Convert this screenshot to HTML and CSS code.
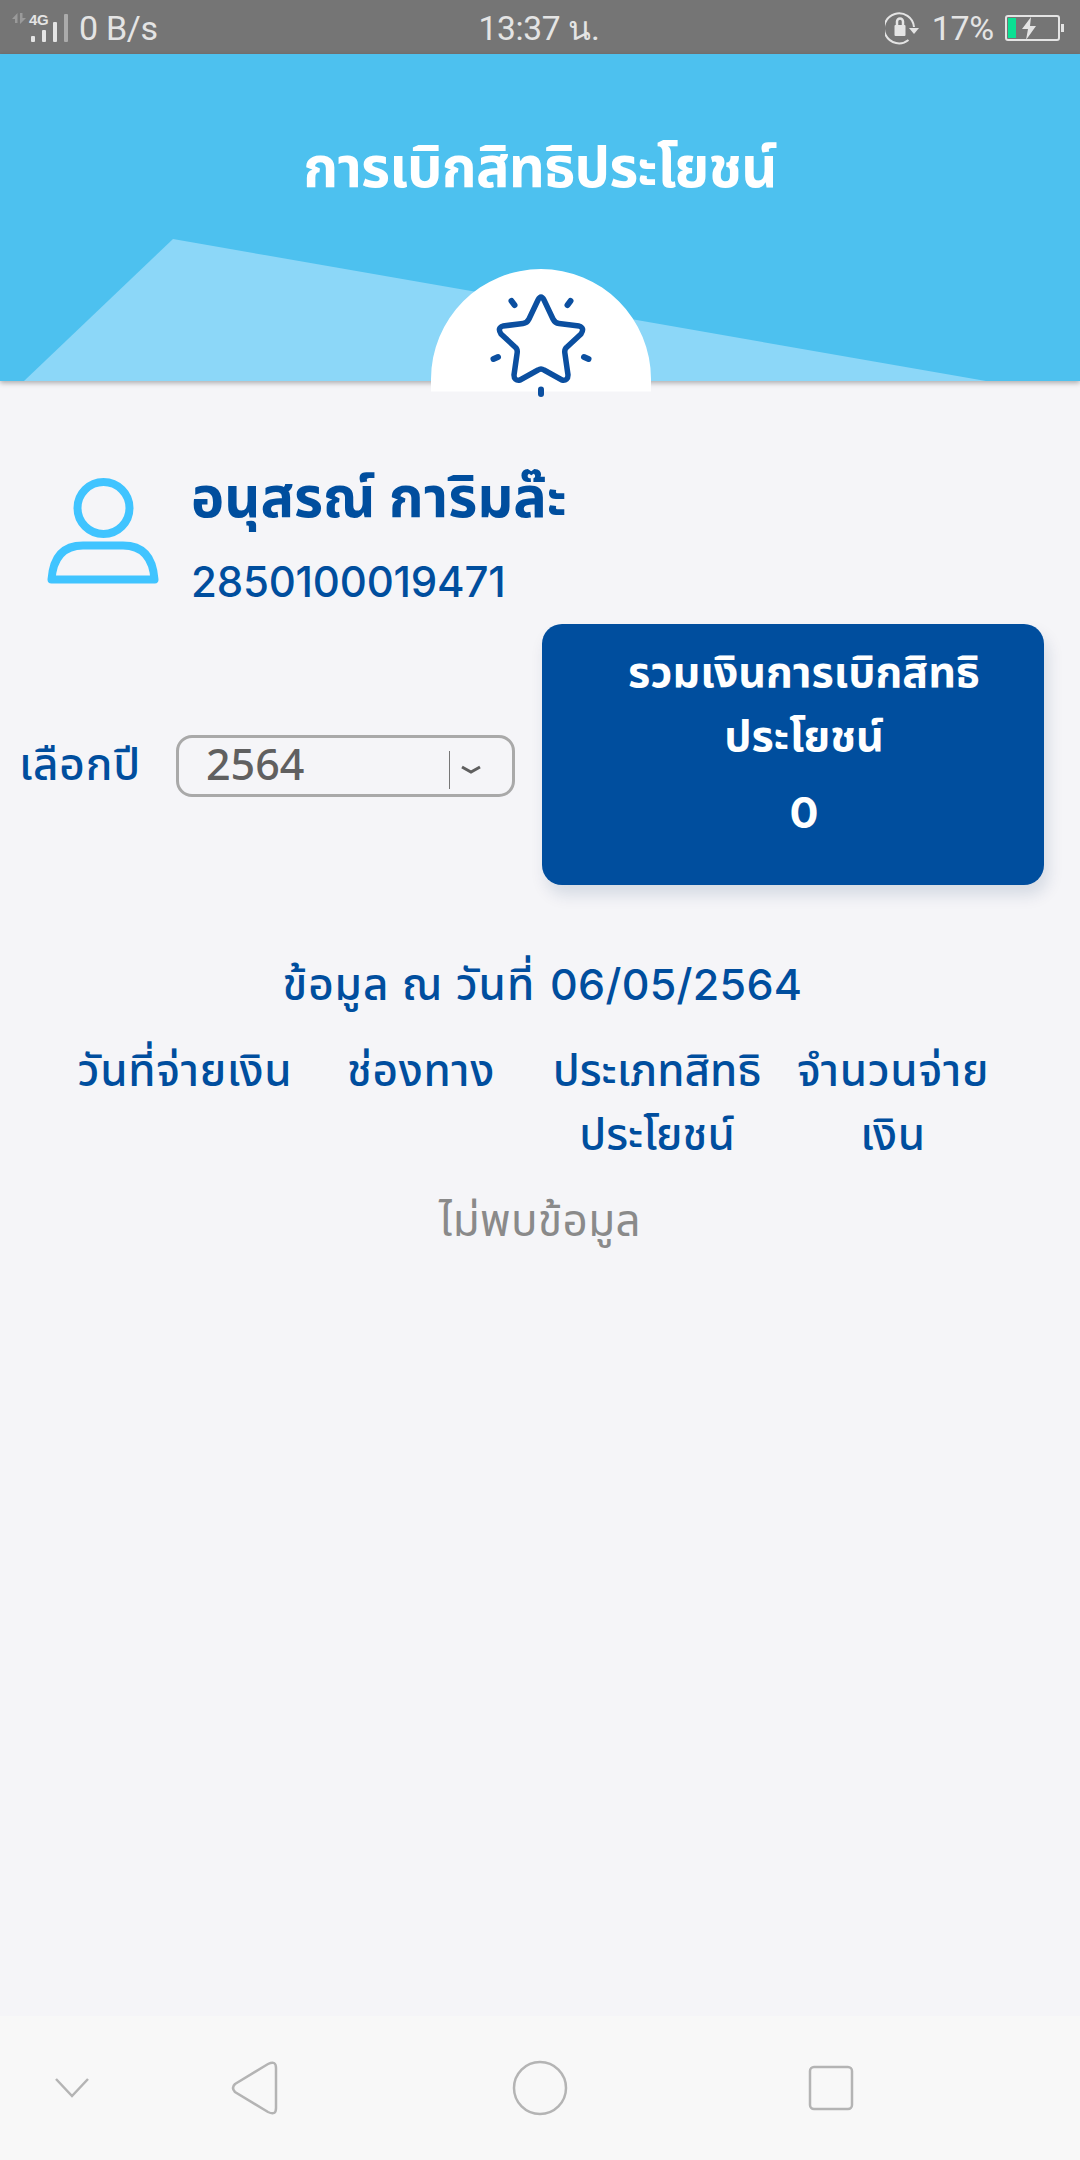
FILE: index.html
```html
<!DOCTYPE html>
<html lang="th">
<head>
    <meta charset="UTF-8">
    <meta name="viewport" content="width=device-width, initial-scale=1.0">
    <title>การเบิกสิทธิประโยชน์</title>
    <link rel="stylesheet" href="styles.css">
</head>
<body>

<div class="status-bar">
    <div class="status-left">
        <svg class="signal" width="58" height="40" viewBox="0 -4 58 40">
            <path d="M0 6 L5.500 0 V10 H3 V6 Z M8 0 H10.500 V5 H14 L8 11 Z" fill="#9a9a9a"/>
            <rect x="19" y="23" width="4" height="6" rx="1" fill="#e4e4e4"/>
            <rect x="30" y="17" width="4" height="12" rx="1" fill="#e4e4e4"/>
            <rect x="41" y="9" width="4" height="20" rx="1" fill="#e4e4e4"/>
            <rect x="52" y="1" width="4" height="28" rx="1" fill="#ababab"/>
            <text class="net" x="17" y="12">4G</text>
        </svg>
        <span>0 B/s</span>
    </div>
    <div class="status-time">13:37 น.</div>
    <div class="status-right">
        <svg width="38" height="36" viewBox="0 0 38 36" fill="none" stroke="#e4e4e4" stroke-width="2">
            <path d="M23.500 30 A15 15 0 1 1 29 17"/>
            <path d="M24 18 H34 L29 24 Z" fill="#e4e4e4" stroke="none"/>
            <rect x="9.500" y="15" width="11" height="11" rx="1" fill="#e4e4e4" stroke="none"/>
            <path d="M12 16 V11.500 A3 3 0 0 1 18 11.500 V16" stroke-width="2.500"/>
        </svg>
        <span class="percent">17%</span>
        <svg width="59" height="26" viewBox="0 0 59 26">
            <rect x="1" y="1" width="53" height="24" rx="2" fill="none" stroke="#e4e4e4" stroke-width="2"/>
            <rect x="3" y="3" width="8" height="20" fill="#0be093"/>
            <path d="M26 2 L17 14 H23 L21 25 L31 11 H25 Z" fill="#e4e4e4"/>
            <rect x="56" y="9" width="3" height="8" fill="#e4e4e4"/>
        </svg>
    </div>
</div>

<div class="header">
    <h1><span>การเบิกสิทธิประโยชน์</span></h1>
    <svg class="header-art" width="1080" height="166" viewBox="0 0 1080 166">
        <path d="M24 142 L173 0 L986 142 Z" fill="#8cd7f8"/>
        <path d="M431 152.500 V140 A110 110 0 0 1 651 140 V152.500 Z" fill="#fff"/>
        <path d="M538 61 Q541 55 544 61 L553 80 Q555 84 559 84.500 L579 87 Q585 89 581 95 L567 108 Q564 110 565 115 L568 136 Q568 142 562 141 L544 131 Q541 129 538 131 L520 141 Q514 142 514 136 L517 115 Q518 110 515 108 L501 95 Q497 89 503 87 L523 84.500 Q527 84 529 80 Z" fill="none" stroke="#0b4fa0" stroke-width="5.500" stroke-linejoin="round"/>
        <g stroke="#0b4fa0" stroke-width="6" stroke-linecap="round">
            <path d="M511.500 62 L514.500 66"/>
            <path d="M570.500 62 L567.500 66"/>
            <path d="M493.500 120 L498 118"/>
            <path d="M584 118 L588.500 120"/>
            <path d="M541 150.500 V155"/>
        </g>
    </svg>
</div>

<div class="profile">
    <svg width="112" height="108" viewBox="0 0 112 108" fill="none" stroke="#40c4ff" stroke-width="8" stroke-linejoin="round">
        <circle cx="56.500" cy="31" r="26"/>
        <path d="M4.500 102.500 Q7 68.500 36 68.500 H76 Q105 68.500 107.500 102.500 Z"/>
    </svg>
    <div class="profile-text">
        <div class="name"><span>อนุสรณ์ การิมล๊ะ</span></div>
        <div class="id-card">2850100019471</div>
    </div>
</div>

<div class="filter">
    <label class="year-label"><span>เลือกปี</span></label>
    <div class="select">
        <span class="year">2564</span>
        <svg width="34" height="38" viewBox="0 0 34 38" fill="none">
            <path d="M1.500 0 V38" stroke="#777" stroke-width="1"/>
            <path d="M14 16 L23 21 L32 16" stroke="#5f5f5f" stroke-width="3"/>
        </svg>
    </div>
    <div class="card">
        <div class="card-line"><span>รวมเงินการเบิกสิทธิ</span></div>
        <div class="card-line"><span>ประโยชน์</span></div>
        <div class="total">0</div>
    </div>
</div>

<div class="date">
    <span class="date-text">ข้อมูล ณ วันที่</span>
    <span class="date-value">06/05/2564</span>
</div>

<div class="table-head">
    <div><span class="wide">วันที่จ่ายเงิน</span></div>
    <div><span class="wide">ช่องทาง</span></div>
    <div><span>ประเภทสิทธิ</span><br><span>ประโยชน์</span></div>
    <div><span class="wide">จำนวนจ่าย</span><br><span class="wide">เงิน</span></div>
</div>

<div class="empty"><span>ไม่พบข้อมูล</span></div>

<div class="nav-bar">
    <svg width="1080" height="144" viewBox="0 0 1080 144" fill="none" stroke="#b4b4b4" stroke-width="2.500">
        <path d="M56 63 L72 80 L88 63"/>
        <path d="M235 68 L268 48 Q276 44 276 52 V92 Q276 100 268 96 L235 76 Q231 72 235 68 Z"/>
        <circle cx="540" cy="72" r="26"/>
        <rect x="810" y="51" width="42" height="42" rx="4"/>
    </svg>
</div>

</body>
</html>
```
FILE: styles.css
```css
* {
    box-sizing: border-box;
}
body {
    margin: 0;
    width: 1080px;
    height: 2160px;
    display: flex;
    flex-direction: column;
    background: #f5f5f8;
    color: #004e9e;
    font-family: Inter, "Noto Sans Thai", "Noto Sans", sans-serif;
    font-size: 42px;
    font-weight: 500;
    overflow: hidden;
}
span {
    display: inline-block;
    white-space: nowrap;
}
.status-bar {
    display: grid;
    grid-template-columns: 1fr 1fr 1fr;
    align-items: center;
    height: 54px;
    padding: 0 16px 2px 12px;
    background: #757575;
    color: #e4e4e4;
    font-family: Roboto, sans-serif;
    font-size: 34px;
    font-weight: 400;
    letter-spacing: -0.3px;
}
.status-left,
.status-right {
    display: flex;
    align-items: center;
    gap: 9px;
}
.status-right {
    justify-content: flex-end;
}
.percent {
    margin-right: 2px;
}
.status-time {
    padding: 2px 0 0 2px;
    font-size: 33.5px;
    text-align: center;
}
.signal {
    margin-top: 2px;
    overflow: visible;
}
.net {
    font: bold 15px "Liberation Sans", sans-serif;
    fill: #e4e4e4;
}
.header {
    height: 327px;
    background: #4dc1ef;
    box-shadow: 0 2px 5px rgba(0, 0, 0, 0.3);
}
.header h1 {
    height: 185px;
    margin: 0;
    padding-top: 68px;
    color: #fff;
    font-size: 56px;
    letter-spacing: -0.8px;
    line-height: 90px;
    text-align: center;
}
.header-art {
    display: block;
}
.profile {
    display: flex;
    height: 243px;
    padding: 96px 0 0 47px;
    gap: 32px;
}
.name {
    height: 72px;
    margin-top: -16px;
    font-size: 56px;
    font-weight: 700;
    line-height: 72px;
}
.id-card {
    margin-top: 21px;
    font-size: 42px;
    letter-spacing: -0.2px;
    line-height: 56px;
}
.filter {
    display: flex;
    align-items: center;
    height: 261px;
}
.year-label {
    width: 176px;
    margin-top: 23px;
    padding-left: 19px;
    font-size: 44px;
    letter-spacing: 0.8px;
}
.select {
    display: flex;
    align-items: center;
    justify-content: space-between;
    width: 339px;
    height: 62px;
    margin-top: 23px;
    padding: 7px 30px 0 27px;
    border: 3px solid #a9a9a9;
    border-radius: 16px;
    color: #606060;
}
.year {
    margin-top: -12px;
    font-family: "Noto Sans", sans-serif;
    font-size: 43px;
}
.card {
    width: 502px;
    height: 261px;
    margin-left: 27px;
    padding: 15px 0 0 22px;
    border-radius: 20px;
    background: #004e9e;
    box-shadow: 4px 10px 16px rgba(0, 50, 90, 0.13);
    color: #fff;
    font-weight: 700;
    text-align: center;
}
.card-line {
    height: 64px;
    font-size: 43px;
    line-height: 64px;
}
.total {
    font-size: 43px;
    line-height: 91px;
}
.date {
    display: flex;
    justify-content: center;
    gap: 15px;
    margin-top: 67px;
    padding-left: 5px;
    line-height: 64px;
}
.date-text {
    font-size: 44px;
    letter-spacing: 0.9px;
}
.date-value {
    font-size: 43px;
    letter-spacing: 0.3px;
}
.table-head {
    display: grid;
    grid-template-columns: repeat(4, 236px);
    height: 128px;
    margin-top: 22px;
    padding-left: 67px;
    font-size: 44px;
    line-height: 64px;
    text-align: center;
}
.wide {
    letter-spacing: 0.7px;
}
.empty {
    margin-top: 22px;
    color: #8a8a8a;
    font-size: 44px;
    font-weight: 400;
    letter-spacing: 0.4px;
    line-height: 64px;
    text-align: center;
}
.nav-bar {
    height: 144px;
    margin-top: auto;
    background: #f8f8f8;
}
```
